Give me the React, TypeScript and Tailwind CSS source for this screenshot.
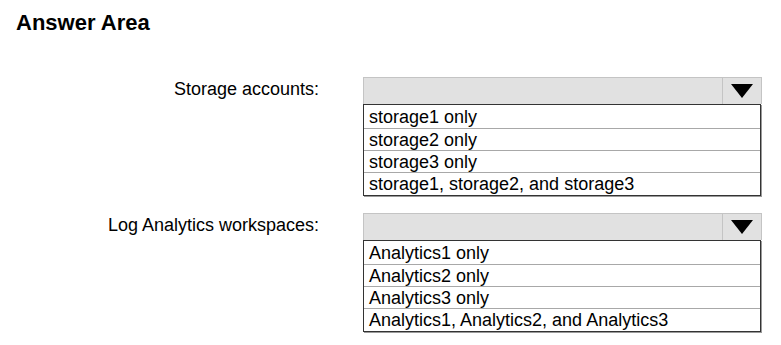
const SECTIONS = [
  {
    label: "Storage accounts:",
    options: [
      "storage1 only",
      "storage2 only",
      "storage3 only",
      "storage1, storage2, and storage3",
    ],
  },
  {
    label: "Log Analytics workspaces:",
    options: [
      "Analytics1 only",
      "Analytics2 only",
      "Analytics3 only",
      "Analytics1, Analytics2, and Analytics3",
    ],
  },
];

function DropdownRow({ label, options }: { label: string; options: string[] }) {
  return (
    <div className="flex">
      <div className="flex h-[27px] w-[319px] items-center justify-end pb-[3px] text-[18px] leading-[22px]">
        {label}
      </div>
      <div className="ml-[44px] w-[399px]">
        <div className="flex h-[27px] border border-b-0 border-[#c4c4c4] bg-[#e1e1e1]">
          <div className="flex-1" />
          <div className="flex w-[39px] items-center justify-center border-l border-[#c4c4c4]">
            <svg width="22" height="14" viewBox="0 0 22 14">
              <polygon points="0,0 22,0 11,14" fill="#000" />
            </svg>
          </div>
        </div>
        <ul className="mr-px border border-[#333] shadow-[1px_1px_0_#9a9a9a]">
          {options.map((option, i) => (
            <li
              key={option}
              className={
                i === 0
                  ? "h-[24px] border-b border-[#a8a8a8] pl-[5px] pt-[1px] text-[18px] leading-[22px]"
                  : i < options.length - 1
                    ? "h-[22px] border-b border-[#a8a8a8] pl-[5px] text-[18px] leading-[22px]"
                    : "h-[22px] pl-[5px] text-[18px] leading-[22px]"
              }
            >
              {option}
            </li>
          ))}
        </ul>
      </div>
    </div>
  );
}

export default function App() {
  return (
    <div className="h-[345px] w-[781px] bg-white font-['Liberation_Sans',Arial,sans-serif] text-black">
      <h1 className="pl-[16px] pt-[10px] text-[22px] font-bold leading-[26px]">
        Answer Area
      </h1>
      <div className="mt-[41px] flex flex-col gap-[17px]">
        {SECTIONS.map((section) => (
          <DropdownRow key={section.label} {...section} />
        ))}
      </div>
    </div>
  );
}
